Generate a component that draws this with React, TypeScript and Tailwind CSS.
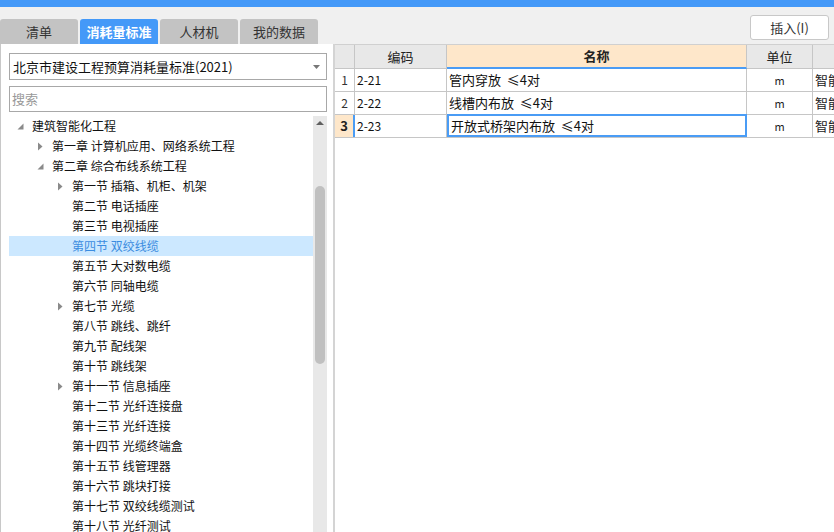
import React from "react";

const F = { fontFamily: '"Microsoft YaHei", "Noto Sans CJK SC", "Noto Sans", sans-serif' };

type Node = { label: string; level: number; arrow?: "right" | "down"; selected?: boolean };

const tree: Node[] = [
  { label: "建筑智能化工程", level: 0, arrow: "down" },
  { label: "第一章 计算机应用、网络系统工程", level: 1, arrow: "right" },
  { label: "第二章 综合布线系统工程", level: 1, arrow: "down" },
  { label: "第一节 插箱、机柜、机架", level: 2, arrow: "right" },
  { label: "第二节 电话插座", level: 2 },
  { label: "第三节 电视插座", level: 2 },
  { label: "第四节 双绞线缆", level: 2, selected: true },
  { label: "第五节 大对数电缆", level: 2 },
  { label: "第六节 同轴电缆", level: 2 },
  { label: "第七节 光缆", level: 2, arrow: "right" },
  { label: "第八节 跳线、跳纤", level: 2 },
  { label: "第九节 配线架", level: 2 },
  { label: "第十节 跳线架", level: 2 },
  { label: "第十一节 信息插座", level: 2, arrow: "right" },
  { label: "第十二节 光纤连接盘", level: 2 },
  { label: "第十三节 光纤连接", level: 2 },
  { label: "第十四节 光缆终端盒", level: 2 },
  { label: "第十五节 线管理器", level: 2 },
  { label: "第十六节 跳块打接", level: 2 },
  { label: "第十七节 双绞线缆测试", level: 2 },
  { label: "第十八节 光纤测试", level: 2 },
];

const rows = [
  { n: "1", code: "2-21", name: "管内穿放  ≤4对" },
  { n: "2", code: "2-22", name: "线槽内布放  ≤4对" },
  { n: "3", code: "2-23", name: "开放式桥架内布放  ≤4对" },
];

function Arrow({ kind }: { kind?: "right" | "down" }) {
  if (kind === "right")
    return (
      <svg width="6" height="9" viewBox="0 0 6 9">
        <path d="M1 0.5 L5.5 4.5 L1 8.5 Z" fill="#8a8a8a" />
      </svg>
    );
  if (kind === "down")
    return (
      <svg width="7" height="7" viewBox="0 0 7 7">
        <path d="M6.5 0.5 L6.5 6.5 L0.5 6.5 Z" fill="#8a8a8a" />
      </svg>
    );
  return null;
}

export default function App() {
  return (
    <div className="w-[834px] h-[532px] overflow-hidden bg-[#f0f0f0] flex flex-col text-[#222]" style={F}>
      <div className="h-[7px] bg-[#4499f8] shrink-0" />
      <div className="flex flex-1 min-h-0">
        {/* Left */}
        <div className="w-[335px] shrink-0 flex flex-col">
          <div className="h-[37px] flex items-end gap-[2px] pl-0">
            <div className="w-[78px] h-[25px] rounded-t-[3px] bg-[#c3c3c3] flex items-center justify-center text-[13px] text-[#333]">清单</div>
            <div className="w-[78px] h-[25px] rounded-t-[3px] bg-[#4499f8] flex items-center justify-center text-[13px] text-white font-bold">消耗量标准</div>
            <div className="w-[78px] h-[25px] rounded-t-[3px] bg-[#c3c3c3] flex items-center justify-center text-[13px] text-[#333]">人材机</div>
            <div className="w-[78px] h-[25px] rounded-t-[3px] bg-[#c3c3c3] flex items-center justify-center text-[13px] text-[#333]">我的数据</div>
          </div>
          <div className="flex-1 min-h-0 bg-white border-l border-[#c8c8c8] border-r-2 border-r-[#d4d4d4] flex flex-col pl-[8px] pr-[6px]">
            <div className="mt-[9px] h-[27px] border border-[#a8a8a8] flex items-center pl-[3px] pr-[6px] text-[13px] text-[#111]">
              <span className="flex-1">北京市建设工程预算消耗量标准(2021)</span>
              <svg width="7" height="4" viewBox="0 0 7 4"><path d="M0 0 H7 L3.5 4 Z" fill="#777" /></svg>
            </div>
            <div className="mt-[6px] h-[26px] border border-[#a8a8a8] flex items-center pl-[2px] text-[13px] text-[#999]">搜索</div>
            <div className="mt-[4px] flex flex-1 min-h-0">
              <div className="flex-1 flex flex-col">
                {tree.map((t, i) => (
                  <div
                    key={i}
                    className={`h-[20px] shrink-0 flex items-center text-[12px] ${t.selected ? "bg-[#cce8ff] text-[#3b8ce0]" : "text-[#111]"}`}
                  >
                    <div style={{ width: 8 + t.level * 20 }} />
                    <div className="w-[15px] flex items-center">
                      <Arrow kind={t.arrow} />
                    </div>
                    <span className="whitespace-nowrap">{t.label}</span>
                  </div>
                ))}
              </div>
              <div className="w-[14px] shrink-0 bg-[#e8e8e8] flex flex-col items-center">
                <div className="h-[13px] flex items-center justify-center">
                  <svg width="8" height="4" viewBox="0 0 8 4"><path d="M0 4 L4 0 L8 4 Z" fill="#606060" /></svg>
                </div>
                <div className="mt-[57px] w-[10px] h-[178px] rounded-[5px] bg-[#c0c0c0]" />
              </div>
            </div>
          </div>
        </div>
        {/* Right */}
        <div className="flex-1 min-w-0 flex flex-col">
          <div className="h-[37px] flex items-start justify-end pr-[5px] pt-[8px]">
            <div className="w-[79px] h-[25px] bg-white border border-[#c8c8c8] rounded-[3px] flex items-center justify-center text-[13px] text-[#333]">插入(I)</div>
          </div>
          <div className="flex-1 bg-white border-t border-[#d0d0d0]">
            <div className="flex h-[24px] text-[13px] bg-[#e8e8e8] border-b border-[#c6c6c6]">
              <div className="w-[20px] border-r border-[#c6c6c6]" />
              <div className="w-[92px] border-r border-[#c6c6c6] flex items-center justify-center">编码</div>
              <div className="w-[300px] border-r border-[#c6c6c6] bg-[#fee7ca] flex items-center justify-center font-bold border-b-2 border-b-[#4a9cf5] -mb-px">名称</div>
              <div className="w-[66px] border-r border-[#c6c6c6] flex items-center justify-center">单位</div>
              <div className="flex-1" />
            </div>
            {rows.map((r, i) => {
              const sel = i === 2;
              return (
                <div key={i} className="flex h-[23px] text-[12px] border-b border-[#c6c6c6]">
                  <div
                    className={`w-[20px] flex items-center justify-center ${sel ? "bg-[#fee7ca] font-bold text-[13px] border-r-2 border-r-[#4a9cf5]" : "border-r border-[#c6c6c6] text-[#333]"}`}
                  >
                    {r.n}
                  </div>
                  <div className="w-[92px] border-r border-[#c6c6c6] flex items-center pl-[2px] text-[#111]">{r.code}</div>
                  <div
                    className={`w-[300px] flex items-center pl-[2px] text-[13px] text-[#111] whitespace-pre ${sel ? "border-2 border-[#4a9cf5] -mt-px" : "border-r border-[#c6c6c6]"}`}
                  >
                    {r.name}
                  </div>
                  <div className="w-[66px] border-r border-[#c6c6c6] flex items-center justify-center text-[11px]">m</div>
                  <div className="flex-1 flex items-center pl-[2px] text-[13px] overflow-hidden whitespace-nowrap">智能化</div>
                </div>
              );
            })}
          </div>
        </div>
      </div>
    </div>
  );
}
